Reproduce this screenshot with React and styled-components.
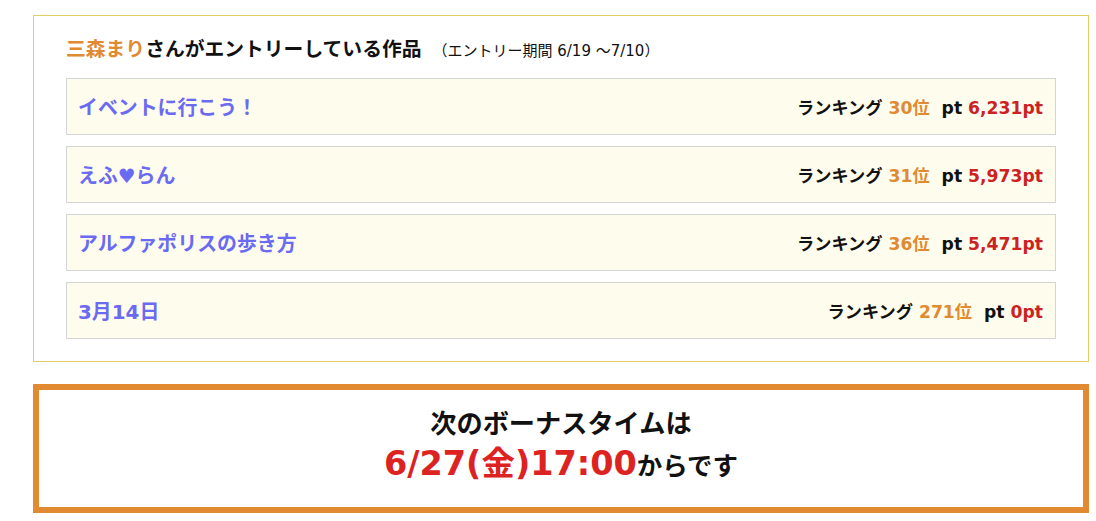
import React from "react";
import styled, { createGlobalStyle } from "styled-components";

const Global = createGlobalStyle`
  html, body { margin: 0; padding: 0; background: #fff; }
  body { font-family: "DejaVu Sans", "Noto Sans CJK JP", sans-serif; }
`;

const Page = styled.div`
  padding: 15px 8px 8px 33px;
  width: 1056px;
`;

const EntryBox = styled.section`
  border: 1px solid #e2ce63;
  padding: 20px 32px 22px 32px;
`;

const Title = styled.h2`
  margin: 0 0 14px;
  height: 28px;
  font-size: 19.8px;
  line-height: 28px;
  font-weight: 700;
  color: #111;
  display: flex;
  align-items: baseline;
`;

const Author = styled.span`
  color: #e08a32;
`;

const Period = styled.span`
  font-size: 15px;
  font-weight: 400;
  margin-left: 11px;
`;

const List = styled.div`
  display: flex;
  flex-direction: column;
  gap: 11px;
`;

const Row = styled.div`
  height: 55px;
  border: 1px solid #d4d4d4;
  background: #fefcec;
  display: flex;
  align-items: center;
  justify-content: space-between;
  padding: 0 12px 0 11px;
`;

const WorkTitle = styled.span`
  font-size: 19.9px;
  font-weight: 700;
  color: #6a6af2;
`;

const Stats = styled.span`
  font-size: 17.2px;
  font-weight: 700;
  color: #111;
  white-space: pre;
`;

const Rank = styled.span`
  color: #e08a32;
`;

const Points = styled.span`
  color: #cc2222;
`;

const BonusBox = styled.section`
  margin-top: 22px;
  border: 6px solid #e28a32;
  padding: 16px 0 17px;
  text-align: center;
  font-weight: 700;
  color: #111;
`;

const BonusLead = styled.div`
  font-size: 26.2px;
  line-height: 36px;
`;

const BonusTime = styled.div`
  font-size: 25.5px;
  line-height: 48px;
  height: 48px;
`;

const Red = styled.span`
  color: #dd2222;
  font-size: 33.5px;
  line-height: 1;
`;

const works = [
  { title: "イベントに行こう！", rank: 30, pt: "6,231" },
  { title: "えふ♥らん", rank: 31, pt: "5,973" },
  { title: "アルファポリスの歩き方", rank: 36, pt: "5,471" },
  { title: "3月14日", rank: 271, pt: "0" },
];

export default function App() {
  return (
    <Page>
      <Global />
      <EntryBox>
        <Title>
          <span>
            <Author>三森まり</Author>さんがエントリーしている作品
          </span>
          <Period>（エントリー期間 6/19 ～7/10）</Period>
        </Title>
        <List>
          {works.map((w) => (
            <Row key={w.title}>
              <WorkTitle>{w.title}</WorkTitle>
              <Stats>
                ランキング <Rank>{w.rank}位</Rank>{"  "}pt <Points>{w.pt}pt</Points>
              </Stats>
            </Row>
          ))}
        </List>
      </EntryBox>
      <BonusBox>
        <BonusLead>次のボーナスタイムは</BonusLead>
        <BonusTime>
          <Red>6/27(金)17:00</Red>からです
        </BonusTime>
      </BonusBox>
    </Page>
  );
}
